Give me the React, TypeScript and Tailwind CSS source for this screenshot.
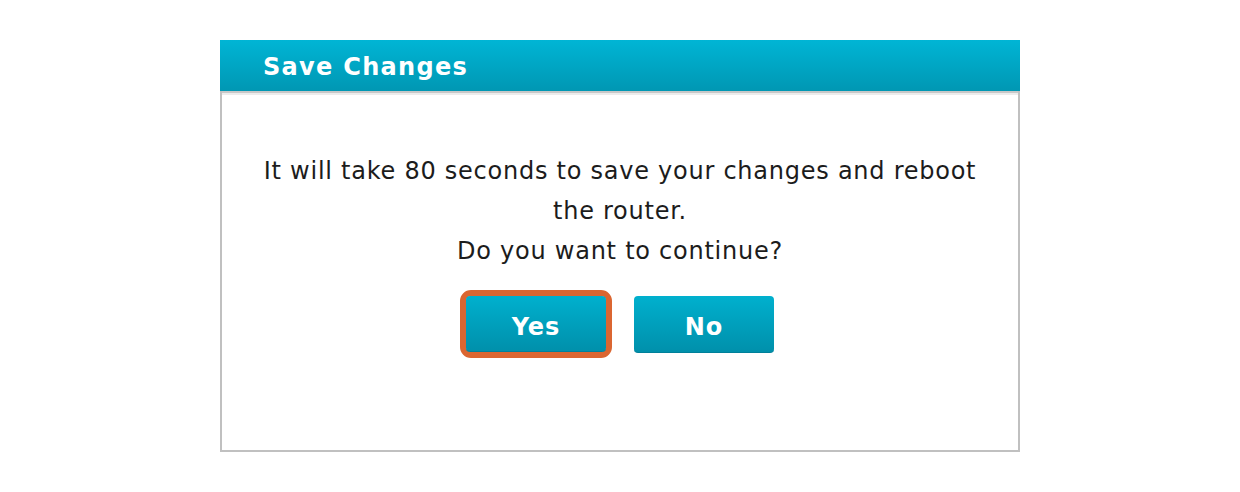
export default function App() {
  return (
    <div className="min-h-[492px] w-[1240px] bg-white pt-[40px] font-['DejaVu_Sans',Verdana,sans-serif]">
      <div className="ml-[220px] flex h-[412px] w-[800px] flex-col border-x-2 border-b-2 border-[#c0c0c0]">
        {/* header */}
        <div className="-mx-[2px] flex h-[51px] shrink-0 items-center bg-gradient-to-b from-[#00b5d5] to-[#0097b3] pl-[43px] pt-[3px]">
          <h1 className="text-[24px] font-bold tracking-[1.3px] text-white">Save Changes</h1>
        </div>
        <div className="h-[2px] bg-[#c8c8c8]" />
        <div className="h-[2px] bg-[#ececec]" />

        {/* body */}
        <div className="flex flex-col items-center pt-[56px]">
          <p className="text-center text-[24px] leading-[40px] tracking-[0.75px] text-[#1c1c1c]">
            <span className="whitespace-nowrap">It will take 80 seconds to save your changes and reboot</span>
            <br />
            the router.
            <br />
            Do you want to continue?
          </p>

          <div className="mt-[19px] flex items-center gap-[22px] pr-[6px]">
            <div className="rounded-[11px] border-[6px] border-[#db6631]">
              <button className="h-[56px] w-[140px] rounded-[4px] border-b border-[#00809a] bg-gradient-to-b from-[#00b0ce] to-[#0090ab] pt-[7px] text-[24px] font-bold tracking-[1px] text-white">
                Yes
              </button>
            </div>
            <button className="h-[57px] w-[140px] rounded-[4px] border-b border-[#00809a] bg-gradient-to-b from-[#00b0ce] to-[#0090ab] pt-[7px] text-[24px] font-bold tracking-[1px] text-white">
              No
            </button>
          </div>
        </div>
      </div>
    </div>
  );
}
